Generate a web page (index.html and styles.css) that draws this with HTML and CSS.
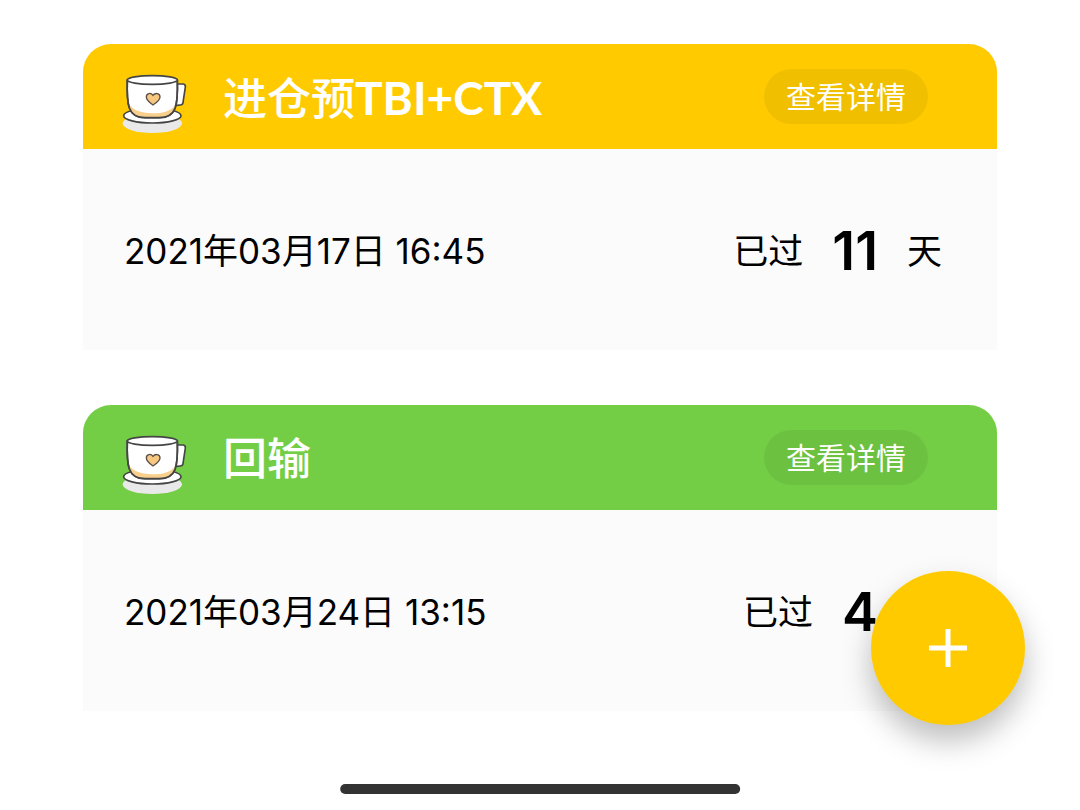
FILE: index.html
```html
<!DOCTYPE html>
<html lang="zh-CN">
<head>
  <meta charset="UTF-8">
  <meta name="viewport" content="width=device-width, initial-scale=1.0">
  <title>倒数日</title>
  <link rel="stylesheet" href="styles.css">
</head>
<body>
  <svg class="sprite" aria-hidden="true">
    <symbol id="cup" viewBox="36 39 198 186">
      <ellipse cx="127" cy="190" rx="89" ry="29" fill="#e9e9e9"/>
      <g stroke="#454545" stroke-width="5" stroke-linejoin="round" stroke-linecap="round">
        <ellipse cx="127" cy="167" rx="86" ry="22" fill="#fff"/>
        <path d="M203 72L220 72Q227 73 226 81L219 128Q218 135 211 135L200 136" fill="#fff"/>
        <path d="M52 59C51 90 50 122 58 143C65 163 83 173 105 173H148C171 173 188 163 195 145C204 122 203 90 202 59Z" fill="#fff"/>
      </g>
      <path d="M55 130C68 151 92 159 127 160C160 160 186 153 199 131C196 158 174 171 148 171H105C77 171 59 157 55 130Z" fill="#f8cf8c"/>
      <path d="M52 59C51 90 50 122 58 143C65 163 83 173 105 173H148C171 173 188 163 195 145C204 122 203 90 202 59" fill="none" stroke="#454545" stroke-width="5"/>
      <ellipse cx="127" cy="60" rx="75" ry="13" fill="#fff" stroke="#454545" stroke-width="5"/>
      <path d="M129 135C119 128 109 121 109 111C109 99 123 97 129 106C136 97 150 100 150 111C150 121 139 128 129 135Z" fill="#f8c880" stroke="#5b5048" stroke-width="4"/>
    </symbol>
  </svg>

  <main class="list">
    <section class="card">
      <header class="card-head yellow">
        <svg class="icon" aria-hidden="true"><use href="#cup"/></svg>
        <h2>进仓预<b>TBI+CTX</b></h2>
        <button type="button" class="detail">查看详情</button>
      </header>
      <div class="card-body">
        <time datetime="2021-03-17T16:45">2021年03月17日 16:45</time>
        <p class="days"><span>已过</span><strong>11</strong><span>天</span></p>
      </div>
    </section>

    <section class="card">
      <header class="card-head green">
        <svg class="icon" aria-hidden="true"><use href="#cup"/></svg>
        <h2>回输</h2>
        <button type="button" class="detail">查看详情</button>
      </header>
      <div class="card-body">
        <time datetime="2021-03-24T13:15">2021年03月24日 13:15</time>
        <p class="days"><span>已过</span><strong>4</strong><span>天</span></p>
      </div>
    </section>
  </main>

  <button type="button" class="fab" aria-label="添加">
    <svg viewBox="0 0 40 40" aria-hidden="true"><path d="M20 1V39M1 20H39" stroke="#fff" stroke-width="5"/></svg>
  </button>
  <div class="home-bar"></div>
</body>
</html>
```
FILE: styles.css
```css
*{box-sizing:border-box;}
body{margin:0;background:#fff;color:#000;font-family:Inter,"Noto Sans CJK SC",sans-serif;}
h2,p{margin:0;}
.sprite{position:absolute;width:0;height:0;}

.list{display:flex;flex-direction:column;gap:55px;padding:44px 83px 0;}
.card{border-radius:28px 28px 0 0;overflow:hidden;background:#fbfbfb;}
.card-head{display:flex;align-items:center;height:105px;padding:0 69px 0 39px;color:#fff;}
.yellow{background:#ffcb00;}
.green{background:#73ce46;}
.icon{width:66px;height:62px;margin-top:14px;flex:none;}
.card-head h2{flex:1;margin-left:35px;padding-top:2px;font-family:Lato,"Noto Sans CJK SC",sans-serif;font-size:44px;line-height:55px;font-weight:500;}
.card-head b{font-size:46px;font-weight:700;}
.detail{height:55px;padding:2px 22px 0;border:none;border-radius:28px;background:rgba(0,0,0,.06);color:#fff;font-family:inherit;font-size:30px;line-height:53px;cursor:pointer;}

.card-body{display:flex;justify-content:space-between;align-items:center;padding:70px 55px 67px 41px;font-size:35px;line-height:64px;}
.days{display:flex;align-items:center;gap:29px;}
.days strong{font-size:54px;font-weight:600;}

.fab{position:fixed;right:55px;bottom:85px;display:flex;align-items:center;justify-content:center;width:154px;height:154px;padding:0;border:none;border-radius:50%;background:#ffcb00;box-shadow:0 16px 30px rgba(0,0,0,.26);cursor:pointer;}
.fab svg{width:40px;height:40px;}
.home-bar{position:fixed;left:50%;bottom:16px;width:37%;height:10px;border-radius:5px;background:#333;transform:translateX(-50%);}
```
